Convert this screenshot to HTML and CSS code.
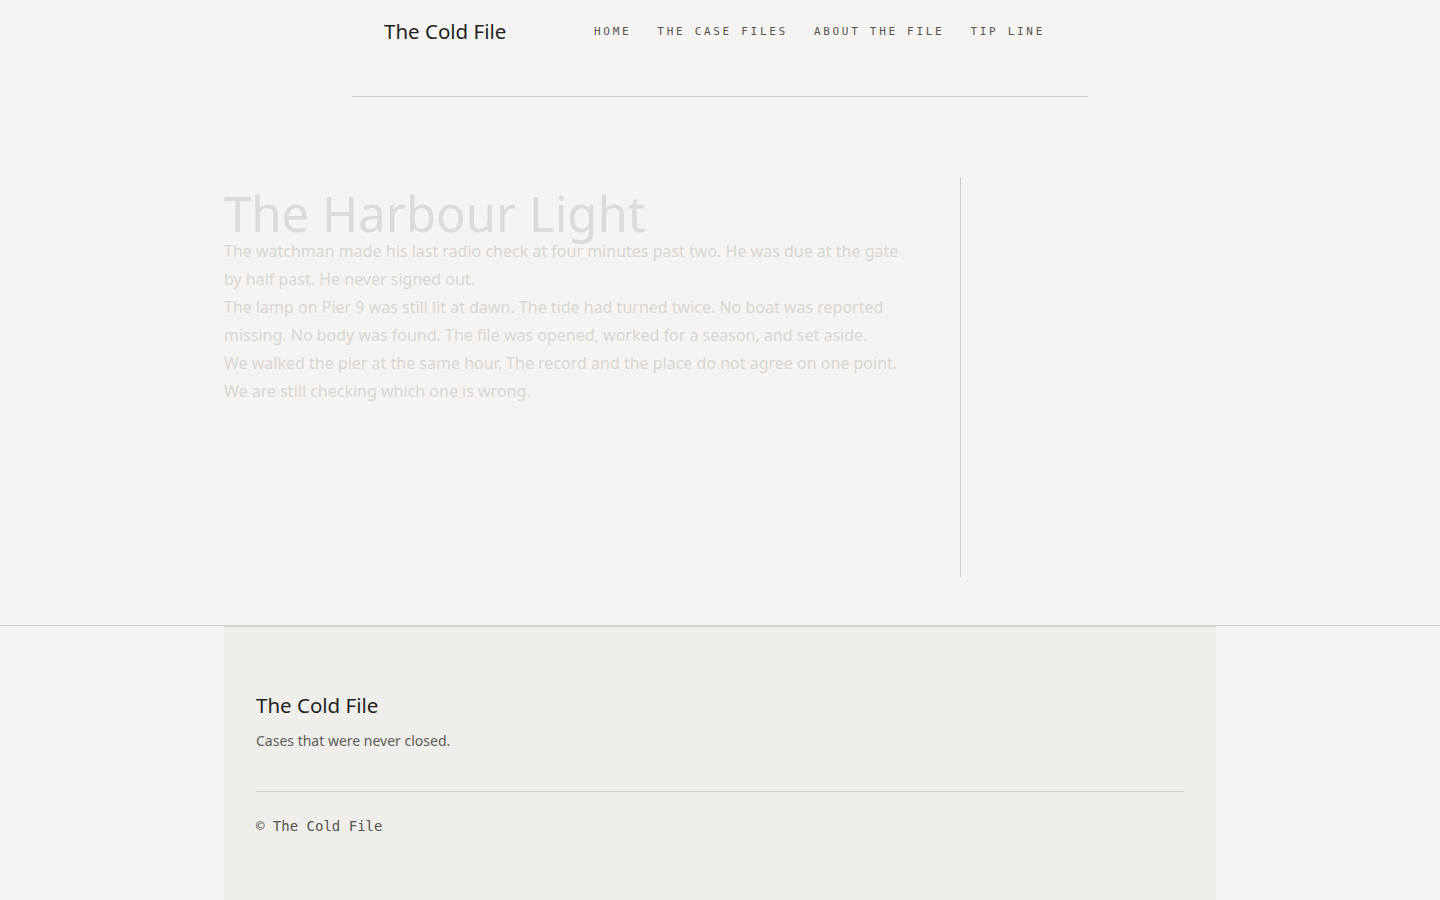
FILE: index.html
```html
<!DOCTYPE html>
<html lang="en">
<head>
<meta charset="utf-8">
<title>The Harbour Light — The Cold File</title>
<link rel="stylesheet" href="styles.css">
</head>
<body>
<header class="site-header">
  <div class="header-inner">
    <a class="logo" href="#">The Cold File</a>
    <nav class="nav">
      <a href="#">Home</a>
      <a href="#">The Case Files</a>
      <a href="#">About the File</a>
      <a href="#">Tip Line</a>
    </nav>
  </div>
</header>

<main class="main">
  <article class="story">
    <h1 class="story-title">The Harbour Light</h1>
    <p>The watchman made his last radio check at four minutes past two. He was due at the gate by half past. He never signed out.</p>
    <p>The lamp on Pier 9 was still lit at dawn. The tide had turned twice. No boat was reported missing. No body was found. The file was opened, worked for a season, and set aside.</p>
    <p>We walked the pier at the same hour. The record and the place do not agree on one point. We are still checking which one is wrong.</p>
  </article>
  <aside class="sidebar"></aside>
</main>

<footer class="site-footer">
  <div class="footer-inner">
    <div class="footer-brand">The Cold File</div>
    <p class="footer-tag">Cases that were never closed.</p>
    <div class="footer-bottom">© The Cold File</div>
  </div>
</footer>
</body>
</html>
```

FILE: styles.css
```css
* {
  box-sizing: border-box;
}

html,
body {
  margin: 0;
  padding: 0;
}

body {
  background: #f5f4f2;
  color: #222;
  font-family: "Noto Sans", "Open Sans", sans-serif;
}

a {
  color: inherit;
  text-decoration: none;
}

/* Header */
.site-header {
  display: flex;
  justify-content: center;
}

.header-inner {
  width: 736px;
  height: 97px;
  padding: 19px 32px 0;
  border-bottom: 1px solid #cfcecb;
  display: flex;
  align-items: flex-start;
}

.logo {
  font-size: 20.5px;
  line-height: 25px;
  color: #1f1f1f;
}

.nav {
  margin-left: auto;
  margin-right: 11px;
  display: flex;
  gap: 26px;
  padding-top: 6px;
}

.nav a {
  font-family: "DejaVu Sans Mono", "Liberation Mono", monospace;
  font-size: 11px;
  line-height: 14px;
  letter-spacing: 2.7px;
  text-transform: uppercase;
  color: #57534f;
}

/* Main */
.main {
  width: 992px;
  margin: 0 auto;
  padding: 80px 0 48px;
  display: grid;
  grid-template-columns: 1fr 256px;
}

.story {
  max-width: 680px;
  padding-top: 12px;
  color: #d8d6d3;
}

.story-title {
  margin: 0;
  font-size: 49px;
  line-height: 48px;
  font-weight: 400;
  color: #dcdbd8;
}

.story p {
  margin: 0;
  font-size: 16px;
  line-height: 28px;
}

.sidebar {
  border-left: 1px solid #cfcecb;
  min-height: 400px;
}

/* Footer */
.site-footer {
  border-top: 1px solid #d2d1ce;
}

.footer-inner {
  width: 992px;
  margin: 0 auto;
  min-height: 280px;
  background: #efeeea;
  border-top: 1px solid #d0cfca;
  padding: 66px 32px 64px;
}

.footer-brand {
  font-size: 20.5px;
  line-height: 25px;
  color: #1f1f1f;
}

.footer-tag {
  margin: 12px 0 0;
  font-size: 14px;
  line-height: 21px;
  color: #5e5b57;
}

.footer-bottom {
  margin-top: 40px;
  padding-top: 24px;
  border-top: 1px solid #d2d1cd;
  font-family: "DejaVu Sans Mono", "Liberation Mono", monospace;
  font-size: 14px;
  line-height: 20px;
  color: #55524e;
}
```
